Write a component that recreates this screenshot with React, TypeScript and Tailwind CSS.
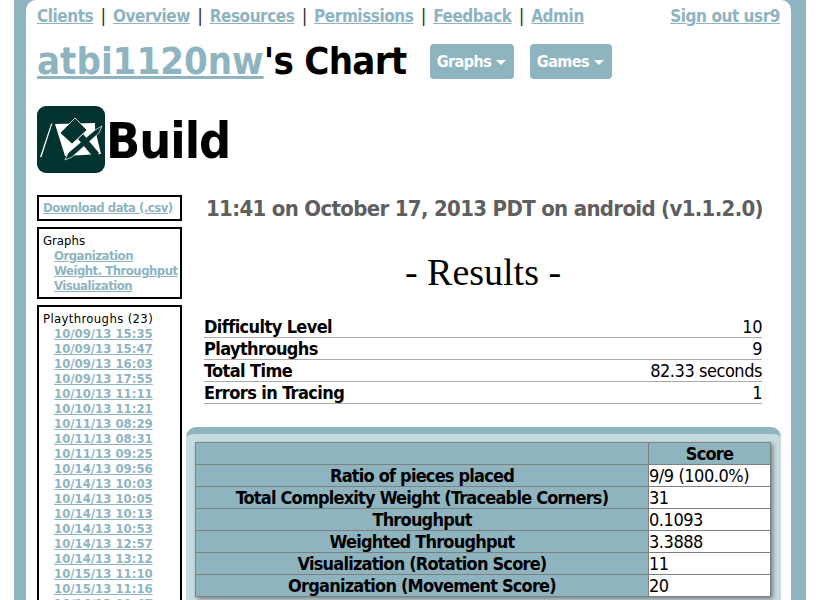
import React from 'react';

const navLinks = ['Clients', 'Overview', 'Resources', 'Permissions', 'Feedback', 'Admin'];
const plays = [
  '10/09/13 15:35', '10/09/13 15:47', '10/09/13 16:03', '10/09/13 17:55', '10/10/13 11:11', '10/10/13 11:21',
  '10/11/13 08:29', '10/11/13 08:31', '10/11/13 09:25', '10/14/13 09:56', '10/14/13 10:03', '10/14/13 10:05',
  '10/14/13 10:13', '10/14/13 10:53', '10/14/13 12:57', '10/14/13 13:12', '10/15/13 11:10', '10/15/13 11:16',
  '10/16/13 09:47',
];
const summary = [
  ['Difficulty Level', '10'],
  ['Playthroughs', '9'],
  ['Total Time', '82.33 seconds'],
  ['Errors in Tracing', '1'],
];
const scores = [
  ['Ratio of pieces placed', '9/9 (100.0%)'],
  ['Total Complexity Weight (Traceable Corners)', '31'],
  ['Throughput', '0.1093'],
  ['Weighted Throughput', '3.3888'],
  ['Visualization (Rotation Score)', '11'],
  ['Organization (Movement Score)', '20'],
];

const BuildLogo = () => (
  <svg width="68" height="67" viewBox="0 0 68 67" className="shrink-0">
    <rect width="68" height="67" rx="9" fill="#03332f" />
    {/* tent */}
    <path d="M3 51 L14 18 L15.5 17 L4.5 51 Z" fill="#fff" />
    <path d="M18 18 L58 17 L58 23 L64 48 L28 50 Z" fill="#fff" />
    {/* nail */}
    <path d="M28 54 L31 47 L58 24 L65 20 L62 27 L35 51 Z" fill="#03332f" stroke="#fff" strokeWidth="0.7" />
    {/* hammer */}
    <path d="M41 33 L46 28 L62 47 L57 52 Z" fill="#03332f" />
    <path d="M23 27 L38 12 L50 24 L35 38 Z" fill="#03332f" stroke="#fff" strokeWidth="0.8" />
  </svg>
);

const Caret = () => (
  <span className="ml-[5px] inline-block w-0 h-0 align-middle border-x-[5px] border-x-transparent border-t-[5px] border-t-white" />
);

export default function App() {
  return (
    <div className="h-screen overflow-hidden bg-white font-['DejaVu_Sans',sans-serif] [font-stretch:condensed]">
      <div className="ml-[14px] w-[792px] h-full bg-[#8eb4c0] pl-[12px] pr-[15px]">
        <div className="h-full bg-white rounded-t-[10px] pl-[11px] pr-[11px]">
          {/* top nav */}
          <div className="flex justify-between items-center h-[33px] pt-[1px] text-[17px] tracking-[-0.45px] font-bold text-[#8eb4c0]">
            <div className="flex items-center">
              {navLinks.map((l, i) => (
                <span key={l}>
                  {i > 0 && <span className="mx-[7.5px] text-[#222] font-normal">|</span>}
                  <a className="underline">{l}</a>
                </span>
              ))}
            </div>
            <a className="underline">Sign out usr9</a>
          </div>

          {/* title */}
          <div className="flex items-center h-[55px]">
            <h1 className="text-[38px] font-bold text-black leading-none">
              <a className="underline text-[#8eb4c0]">atbi1120nw</a>
              <span className="tracking-[-0.7px]">'s Chart</span>
            </h1>
            <button className="ml-[23px] mt-[2px] h-[35px] w-[84px] rounded-[4px] bg-[#8eb4c0] text-white font-bold text-[16px] tracking-[-0.5px]">Graphs<Caret /></button>
            <button className="ml-[16px] mt-[2px] h-[35px] w-[82px] rounded-[4px] bg-[#8eb4c0] text-white font-bold text-[16px] tracking-[-0.5px]">Games<Caret /></button>
          </div>

          {/* logo */}
          <div className="flex items-center mt-[18px] h-[67px]">
            <BuildLogo />
            <span className="ml-[1px] pt-[2px] text-[50px] font-bold tracking-[-1px] leading-none text-black">Build</span>
          </div>

          <div className="flex mt-[22px]">
            {/* sidebar */}
            <div className="w-[145px] shrink-0 flex flex-col gap-[6px] text-[13px] leading-[15px]">
              <div className="border-2 border-black px-[4px] py-[3px] h-[26px]">
                <a className="underline font-bold text-[#8eb4c0] whitespace-nowrap tracking-[-0.5px]">Download data (.csv)</a>
              </div>
              <div className="border-2 border-black px-[4px] py-[4px] h-[72px]">
                <div className="text-black">Graphs</div>
                <div className="pl-[11px] font-bold text-[#8eb4c0] whitespace-nowrap tracking-[-0.5px]">
                  <div><a className="underline">Organization</a></div>
                  <div><a className="underline">Weight. Throughput</a></div>
                  <div><a className="underline">Visualization</a></div>
                </div>
              </div>
              <div className="border-2 border-black px-[4px] py-[4px] h-[400px]">
                <div className="text-black tracking-[0.35px]">Playthroughs (23)</div>
                <div className="pl-[11px] font-bold text-[#8eb4c0]">
                  {plays.map((p) => (
                    <div key={p}><a className="underline">{p}</a></div>
                  ))}
                </div>
              </div>
            </div>

            {/* main */}
            <div className="flex-1 min-w-0 pl-[4px]">
              <div className="pl-[18px] pr-[18px]">
                <h2 className="pl-[2px] text-[22px] leading-[28px] font-bold text-[#5f5f5f] whitespace-nowrap tracking-[-0.68px]">
                  11:41 on October 17, 2013 PDT on android (v1.1.2.0)
                </h2>
                <div className="mt-[27px] text-center font-['Liberation_Serif',serif] text-[38px] leading-[44px] text-black">- Results -</div>
                <div className="mt-[22px]">
                  {summary.map(([k, v]) => (
                    <div key={k} className="flex justify-between h-[22px] leading-[21px] text-[18px] border-b border-[#aaa] text-black tracking-[-0.45px]">
                      <span className="font-bold tracking-[-0.6px]">{k}</span>
                      <span>{v}</span>
                    </div>
                  ))}
                </div>
              </div>

              {/* score panel */}
              <div className="mt-[23px] rounded-t-[10px] border-t-[7px] border-[#8eb4c0] bg-[#c6dae0] px-[9px] pt-[8px] pb-[4px] w-[595px]">
                <table className="w-[576px] border-collapse text-[18px] text-black shadow-[2px_2px_4px_rgba(0,0,0,0.4)] table-fixed">
                  <tbody>
                    <tr className="h-[22px]">
                      <td className="border border-[#808080] bg-[#8eb4c0] p-0 w-[453px]"></td>
                      <td className="border border-[#808080] bg-[#8eb4c0] p-0 text-center font-bold leading-[21px] tracking-[-0.8px]">Score</td>
                    </tr>
                    {scores.map(([k, v]) => (
                      <tr key={k} className="h-[22px]">
                        <td className="border border-[#808080] bg-[#8eb4c0] p-0 text-center font-bold leading-[21px] tracking-[-0.8px]">{k}</td>
                        <td className="border border-[#808080] bg-white p-0 leading-[21px] tracking-[-0.45px]">{v}</td>
                      </tr>
                    ))}
                  </tbody>
                </table>
              </div>
            </div>
          </div>
        </div>
      </div>
    </div>
  );
}
